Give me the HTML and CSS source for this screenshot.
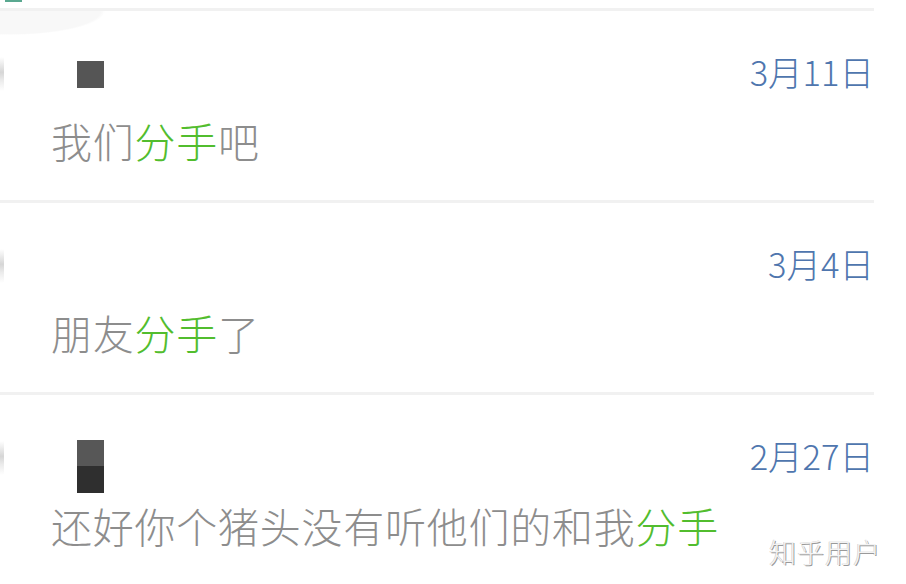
FILE: index.html
```html
<!DOCTYPE html>
<html lang="zh-CN">
<head>
    <meta charset="UTF-8">
    <meta name="viewport" content="width=device-width, initial-scale=1.0">
    <title>搜索记录</title>
    <link rel="stylesheet" href="styles.css">
</head>
<body>
    <div class="screen">
        <div class="top-strip"><span class="top-mark"></span></div>
        <ul class="chat-list">
            <li class="chat-row first">
                <div class="chat-head">
                    <span class="avatar-edge"></span>
                    <span class="name-mask"></span>
                    <span class="chat-date">3月11日</span>
                </div>
                <p class="chat-msg">我们<em>分手</em>吧</p>
            </li>
            <li class="chat-row">
                <div class="chat-head">
                    <span class="avatar-edge"></span>
                    <span class="chat-date">3月4日</span>
                </div>
                <p class="chat-msg">朋友<em>分手</em>了</p>
            </li>
            <li class="chat-row">
                <div class="chat-head">
                    <span class="avatar-edge"></span>
                    <span class="name-mask tall"></span>
                    <span class="chat-date">2月27日</span>
                </div>
                <p class="chat-msg">还好你个猪头没有听他们的和我<em>分手</em></p>
            </li>
        </ul>
        <div class="watermark">知乎用户</div>
    </div>
</body>
</html>
```

FILE: styles.css
```css
* {
    margin: 0;
    padding: 0;
    box-sizing: border-box;
}

body {
    font-family: "Noto Sans CJK SC", "Noto Sans", sans-serif;
    font-weight: 300;
    background: #ffffff;
    width: 906px;
    height: 584px;
    overflow: hidden;
}

.screen {
    position: relative;
    width: 906px;
    height: 584px;
}

.top-strip {
    width: 874px;
    height: 11px;
    border-bottom: 3px solid #f1f1f1;
}

.top-mark {
    display: block;
    margin-left: 5px;
    padding-top: 4px;
    width: 17px;
    height: 2px;
    border-top: 2px solid #5aa890;
}

.chat-list {
    list-style: none;
    width: 874px;
}

.chat-row {
    height: 192px;
    padding-top: 40px;
    border-bottom: 3px solid #f1f1f1;
}

.chat-row.first {
    background: radial-gradient(ellipse 95px 24px at 10px 0, #f8f8f8 95%, transparent 100%);
}

.chat-row:last-child {
    border-bottom: none;
}

.chat-head {
    display: flex;
    align-items: center;
    height: 40px;
}

.avatar-edge {
    width: 4px;
    height: 34px;
    margin-top: 6px;
    background: linear-gradient(#ffffff, #d6d6d6 45%, #ececec 70%, #ffffff);
}

.name-mask {
    width: 27px;
    height: 27px;
    margin-left: 73px;
    margin-top: 7px;
    background: #555555;
}

.name-mask.tall {
    height: 53px;
    align-self: flex-start;
    margin-top: 5px;
    background: linear-gradient(#575757 50%, #2f2f2f 50%);
}

.chat-date {
    margin-left: auto;
    font-size: 34.5px;
    line-height: 40px;
    color: #4f76ae;
}

.chat-msg {
    margin-top: 25px;
    padding-left: 51px;
    font-size: 41px;
    line-height: 48px;
    letter-spacing: 0.75px;
    color: #8d8d8d;
    white-space: nowrap;
}

.chat-row:last-child .chat-msg {
    margin-top: 26px;
}

.chat-msg em {
    font-style: normal;
    color: #52bd2e;
}

.watermark {
    position: absolute;
    right: 25px;
    bottom: 15px;
    font-size: 27px;
    line-height: 34px;
    color: #f3f3f3;
    letter-spacing: 1px;
    text-shadow: 1px 1px 0 #9a9a9a, -0.5px -0.5px 0 #c8c8c8;
}
```
